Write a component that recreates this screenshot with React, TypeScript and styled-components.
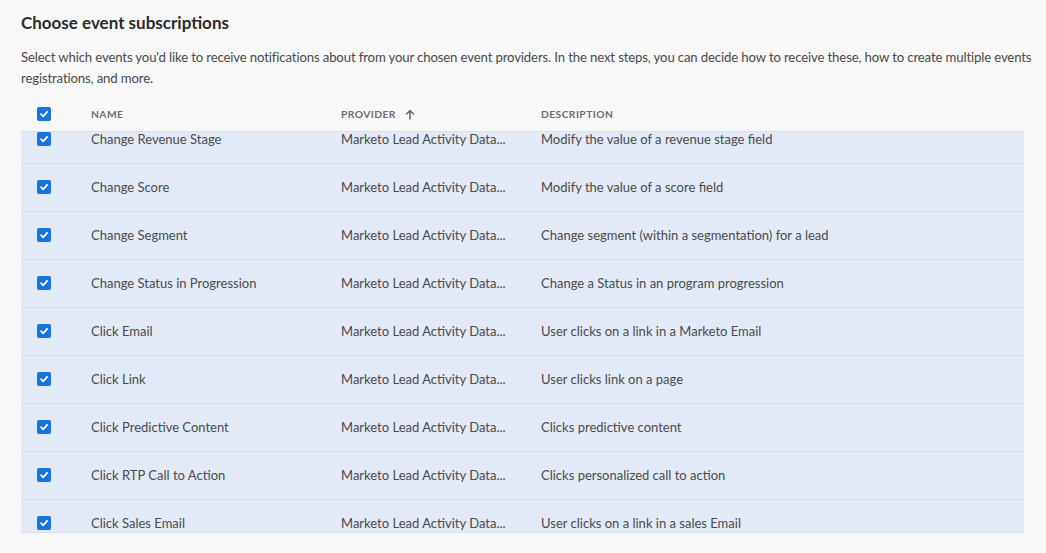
import React, { useLayoutEffect, useRef } from "react";
import styled, { createGlobalStyle } from "styled-components";

const Global = createGlobalStyle`
  html, body { margin: 0; padding: 0; background: #f8f8f8; }
  body { font-family: Lato, "Noto Sans", sans-serif; color: #4b4b4b; }
  * { box-sizing: border-box; }
`;

const Page = styled.div`
  padding: 11px 0 0 21px;
  width: 1046px;
  height: 553px;
  overflow: hidden;
`;

const Title = styled.h2`
  margin: 0;
  font-size: 17px;
  line-height: 24px;
  font-weight: 700;
  color: #2c2c2c;
`;

const Intro = styled.p`
  margin: 12px 0 0;
  font-size: 13.2px;
  letter-spacing: -0.15px;
  line-height: 21px;
  color: #4b4b4b;
  width: 1022px;
`;

const Table = styled.div`
  margin-top: 9px;
  width: 1003px;
`;

const HeaderRow = styled.div`
  display: grid;
  grid-template-columns: 70px 250px 200px 1fr;
  align-items: center;
  height: 33px;
  padding-bottom: 1px;
`;

const HeadCell = styled.div`
  display: flex;
  align-items: center;
  gap: 9px;
  font-size: 10.3px;
  font-weight: 700;
  letter-spacing: 0.04em;
  color: #6e6e6e;
  text-transform: uppercase;
`;

const CheckCell = styled.div`
  display: flex;
  align-items: center;
  padding-left: 16px;
`;

const Box = styled.span`
  width: 14px;
  height: 14px;
  border-radius: 2px;
  background: #1473e6;
  display: inline-flex;
  align-items: center;
  justify-content: center;
`;

const Body = styled.div`
  height: 402px;
  overflow: hidden;
  background: #e1eaf6;
  border-top: 1px solid #d9e1ec;
  border-bottom: 1px solid #d9e1ec;
`;

const Row = styled.div`
  display: grid;
  grid-template-columns: 70px 250px 200px 1fr;
  align-items: center;
  height: 48px;
  padding-bottom: 1px;
  background: #e1eaf6;
  border-bottom: 1px solid #d5dde9;
`;

const Cell = styled.div`
  font-size: 13px;
  color: #4b4b4b;
  white-space: nowrap;
  overflow: hidden;
  text-overflow: ellipsis;
`;

const Check = () => (
  <Box>
    <svg width="10" height="10" viewBox="0 0 10 10">
      <path d="M2 5.2 L4.2 7.3 L8.2 2.8" fill="none" stroke="#fff" strokeWidth="1.8" strokeLinecap="round" strokeLinejoin="round" />
    </svg>
  </Box>
);

const rows = [
  ["Change Revenue Stage", "Modify the value of a revenue stage field"],
  ["Change Score", "Modify the value of a score field"],
  ["Change Segment", "Change segment (within a segmentation) for a lead"],
  ["Change Status in Progression", "Change a Status in an program progression"],
  ["Click Email", "User clicks on a link in a Marketo Email"],
  ["Click Link", "User clicks link on a page"],
  ["Click Predictive Content", "Clicks predictive content"],
  ["Click RTP Call to Action", "Clicks personalized call to action"],
  ["Click Sales Email", "User clicks on a link in a sales Email"],
];

export default function App() {
  const ref = useRef<HTMLDivElement>(null);
  useLayoutEffect(() => {
    if (ref.current) ref.current.scrollTop = 16;
  }, []);
  return (
    <>
      <Global />
      <Page>
        <Title>Choose event subscriptions</Title>
        <Intro>
          Select which events you'd like to receive notifications about from your chosen event providers. In the next steps, you can decide how to receive these, how to create multiple events registrations, and more.
        </Intro>
        <Table>
          <HeaderRow>
            <CheckCell><Check /></CheckCell>
            <HeadCell>Name</HeadCell>
            <HeadCell>
              Provider
              <svg width="10" height="11" viewBox="0 0 10 11">
                <path d="M5 10 V1.5 M1.5 5 L5 1.5 L8.5 5" fill="none" stroke="#6e6e6e" strokeWidth="1.6" strokeLinecap="round" strokeLinejoin="round" />
              </svg>
            </HeadCell>
            <HeadCell>Description</HeadCell>
          </HeaderRow>
          <Body ref={ref}>
            {rows.map(([name, desc]) => (
              <Row key={name}>
                <CheckCell><Check /></CheckCell>
                <Cell>{name}</Cell>
                <Cell>Marketo Lead Activity Data...</Cell>
                <Cell>{desc}</Cell>
              </Row>
            ))}
          </Body>
        </Table>
      </Page>
    </>
  );
}
